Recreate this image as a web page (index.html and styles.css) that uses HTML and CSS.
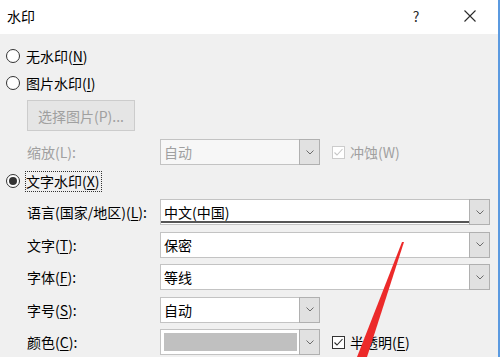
FILE: index.html
```html
<!DOCTYPE html>
<html lang="zh-CN">
<head>
    <meta charset="UTF-8">
    <title>水印</title>
    <link rel="stylesheet" href="styles.css">
</head>
<body>
    <div class="dialog">
        <div class="titlebar">
            <span class="title">水印</span>
            <span class="help">?</span>
            <span class="close">
                <svg width="12" height="12" viewBox="0 0 12 12"><path d="M0.5 0.5L11.5 11.5M11.5 0.5L0.5 11.5" stroke="#2b2b2b" stroke-width="1.1" fill="none"/></svg>
            </span>
        </div>

        <div class="content">
            <div class="radio-row">
                <span class="radio"></span>
                <span class="radio-text">无水印(<u>N</u>)</span>
            </div>
            <div class="radio-row">
                <span class="radio"></span>
                <span class="radio-text">图片水印(<u>I</u>)</span>
            </div>
            <div class="indent">
                <button class="btn" disabled>选择图片(P)...</button>
            </div>

            <div class="field-row scale-row">
                <span class="label disabled">缩放(L):</span>
                <div class="combo narrow is-disabled">
                    <span class="combo-text">自动</span>
                    <span class="drop"><svg width="8" height="5" viewBox="0 0 8 5"><path d="M0.5 0.5L4 4L7.5 0.5" stroke="#6b6b6b" fill="none"/></svg></span>
                </div>
                <span class="check is-disabled"><svg width="11" height="11" viewBox="0 0 11 11"><path d="M1.5 5.5L4 8L9.5 2" stroke="#c6c6c6" stroke-width="1.1" fill="none"/></svg></span>
                <span class="check-label disabled">冲蚀(W)</span>
            </div>

            <div class="radio-row text-mark">
                <span class="radio checked"></span>
                <span class="radio-text focused">文字水印(<u>X</u>)</span>
            </div>

            <div class="field-row">
                <span class="label">语言(国家/地区)(<u>L</u>):</span>
                <div class="combo wide">
                    <span class="combo-text focus">中文(中国)</span>
                    <span class="drop"><svg width="8" height="5" viewBox="0 0 8 5"><path d="M0.5 0.5L4 4L7.5 0.5" stroke="#6b6b6b" fill="none"/></svg></span>
                </div>
            </div>
            <div class="field-row">
                <span class="label">文字(<u>T</u>):</span>
                <div class="combo wide">
                    <span class="combo-text">保密</span>
                    <span class="drop"><svg width="8" height="5" viewBox="0 0 8 5"><path d="M0.5 0.5L4 4L7.5 0.5" stroke="#6b6b6b" fill="none"/></svg></span>
                </div>
            </div>
            <div class="field-row">
                <span class="label">字体(<u>F</u>):</span>
                <div class="combo wide">
                    <span class="combo-text">等线</span>
                    <span class="drop"><svg width="8" height="5" viewBox="0 0 8 5"><path d="M0.5 0.5L4 4L7.5 0.5" stroke="#6b6b6b" fill="none"/></svg></span>
                </div>
            </div>
            <div class="field-row">
                <span class="label">字号(<u>S</u>):</span>
                <div class="combo narrow">
                    <span class="combo-text">自动</span>
                    <span class="drop"><svg width="8" height="5" viewBox="0 0 8 5"><path d="M0.5 0.5L4 4L7.5 0.5" stroke="#6b6b6b" fill="none"/></svg></span>
                </div>
            </div>
            <div class="field-row">
                <span class="label">颜色(<u>C</u>):</span>
                <div class="combo narrow">
                    <span class="combo-text"><span class="swatch"></span></span>
                    <span class="drop"><svg width="8" height="5" viewBox="0 0 8 5"><path d="M0.5 0.5L4 4L7.5 0.5" stroke="#6b6b6b" fill="none"/></svg></span>
                </div>
                <span class="check"><svg width="11" height="11" viewBox="0 0 11 11"><path d="M1.5 5.5L4 8L9.5 2" stroke="#2b2b2b" stroke-width="1.1" fill="none"/></svg></span>
                <span class="check-label">半透明(<u>E</u>)</span>
            </div>
        </div>

        <!-- red annotation arrow drawn over the dialog -->
        <svg class="arrow" width="500" height="357" viewBox="0 0 500 357">
            <polygon points="402,242 404,242 367,357 357,357" fill="#ec2a2a"/>
        </svg>
    </div>
</body>
</html>
```

FILE: styles.css
```css
* {
    box-sizing: border-box;
    margin: 0;
    padding: 0;
}

body {
    width: 500px;
    height: 357px;
    overflow: hidden;
    background-color: #ffffff;
    font-family: "Noto Sans CJK SC", "Noto Sans", sans-serif;
    font-size: 14px;
    color: #000;
}

u {
    text-decoration-thickness: 1px;
    text-underline-offset: 2px;
}

.dialog {
    position: relative;
    width: 500px;
    height: 357px;
    background-color: #f0f0f0;
    border-right: 2px solid #5b9ae0;
    overflow: hidden;
}

.titlebar {
    display: flex;
    align-items: center;
    height: 34px;
    padding: 0 22px 2px 7px;
    background-color: #ffffff;
}

.title {
    flex: 1;
    line-height: 20px;
}

.help {
    width: 12px;
    margin-right: 42px;
    text-align: center;
    font-size: 14px;
    color: #2b2b2b;
    line-height: 20px;
}

.close {
    display: flex;
    width: 12px;
    height: 12px;
}

.content {
    padding: 8px 0 0 6px;
}

.radio-row {
    display: flex;
    align-items: center;
    height: 27px;
}

.radio {
    width: 14px;
    height: 14px;
    margin-right: 6px;
    border: 1px solid #333;
    border-radius: 50%;
    background-color: #fff;
    display: flex;
    align-items: center;
    justify-content: center;
    flex-shrink: 0;
}

.radio.checked::after {
    content: "";
    width: 8px;
    height: 8px;
    border-radius: 50%;
    background-color: #333;
}

.radio-text {
    line-height: 20px;
}

.text-mark {
    height: 30px;
}

.text-mark .radio {
    margin-right: 5px;
}

.radio-text.focused {
    border: 1px dotted #333;
    padding: 0 1px 0 0;
    height: 21px;
    line-height: 19px;
}

.indent {
    padding-left: 21px;
    margin-top: 4px;
}

.btn {
    width: 108px;
    height: 31px;
    border: 1px solid #cccccc;
    background-color: #e5e5e5;
    color: #a0a0a0;
    font-family: inherit;
    font-size: 14px;
}

.field-row {
    display: flex;
    align-items: center;
    height: 32.5px;
    padding-left: 21px;
}

.scale-row {
    height: 28px;
    margin-top: 7px;
}

.label {
    width: 133px;
    flex-shrink: 0;
    line-height: 20px;
}

.disabled {
    color: #a0a0a0;
}

.combo {
    display: flex;
    height: 26px;
    border: 1px solid #c3c3c3;
    background-color: #fff;
}

.combo.wide {
    width: 330px;
}

.combo.narrow {
    width: 160px;
}

.combo.is-disabled {
    background-color: #f7f7f7;
    color: #a0a0a0;
}

.combo-text {
    flex: 1;
    display: flex;
    align-items: center;
    padding-left: 3px;
    line-height: 20px;
}

.combo-text.focus {
    box-shadow: inset 0 -2px 0 #555555;
    margin-bottom: 1px;
}

.swatch {
    display: block;
    width: 133px;
    height: 18px;
    background-color: #c0c0c0;
}

.drop {
    width: 21px;
    margin: -1px -1px -1px 0;
    border: 1px solid #b0b0b0;
    background-color: #e1e1e1;
    display: flex;
    align-items: center;
    justify-content: center;
}

.check {
    width: 13px;
    height: 13px;
    margin-left: 12px;
    margin-right: 5px;
    border: 1px solid #333;
    background-color: #fff;
    display: flex;
    align-items: center;
    justify-content: center;
}

.check.is-disabled {
    border-color: #cccccc;
}

.check-label {
    line-height: 20px;
}

.arrow {
    position: absolute;
    left: 0;
    top: 0;
    pointer-events: none;
}
```
